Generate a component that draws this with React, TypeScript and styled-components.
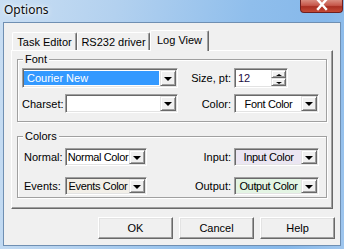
import React from 'react';
import styled, { createGlobalStyle } from 'styled-components';

const GlobalStyle = createGlobalStyle`
  html, body {
    margin: 0;
    padding: 0;
    background: #a9cbee;
  }
  body {
    font-family: "Liberation Sans", Arial, sans-serif;
    font-size: 11px;
    color: #000;
  }
`;

const Window = styled.div`
  width: 344px;
  height: 249px;
  display: flex;
  flex-direction: column;
  overflow: hidden;
  background: linear-gradient(100deg, #c9def3 0%, #b3d1ef 30%, #8fbeec 65%, #86b8ea 85%, #9fc6ee 100%);
`;

const TitleBar = styled.div`
  height: 22px;
  flex-shrink: 0;
  display: flex;
  justify-content: space-between;
  align-items: flex-start;
`;

const Title = styled.div`
  font-family: "Noto Sans", "Open Sans", sans-serif;
  font-size: 12px;
  line-height: 16px;
  margin: 2px 0 0 4px;
  color: #0b0b0b;
  text-shadow: 0 0 6px #eef6ff, 0 0 3px #ffffff;
`;

const CloseButton = styled.div`
  width: 43px;
  height: 13px;
  margin-right: 1px;
  box-sizing: border-box;
  border: 1px solid #6e2020;
  border-top: none;
  border-radius: 0 0 4px 4px;
  background: linear-gradient(#d98b7e 0%, #c6574a 45%, #a92f22 55%, #c44a36 100%);
  display: flex;
  justify-content: center;
  align-items: flex-start;
`;

const Client = styled.div`
  box-sizing: border-box;
  height: 224px;
  margin: 0 3px 0 3px;
  border: 1px solid #6f8fb2;
  background: #f0f0f0;
  display: flex;
  flex-direction: column;
`;

const TabControl = styled.div`
  margin: 7px 0 0 7px;
  width: 322px;
  display: flex;
  flex-direction: column;
`;

const TabStrip = styled.div`
  display: flex;
  align-items: flex-end;
  height: 20px;
  padding-left: 1px;
`;

const Tab = styled.div<{ $w: number; $active?: boolean }>`
  box-sizing: border-box;
  width: ${(p) => p.$w}px;
  height: ${(p) => (p.$active ? 21 : 18)}px;
  margin-bottom: ${(p) => (p.$active ? -1 : 0)}px;
  position: relative;
  z-index: ${(p) => (p.$active ? 2 : 1)};
  background: #f0f0f0;
  border-top: 1px solid #ffffff;
  border-left: 1px solid #ffffff;
  border-right: 1px solid #696969;
  box-shadow: inset -1px 0 #a0a0a0;
  border-radius: 2px 2px 0 0;
  display: flex;
  align-items: center;
  justify-content: center;
  padding-bottom: ${(p) => (p.$active ? 2 : 0)}px;
  white-space: nowrap;
`;

const Panel = styled.div`
  box-sizing: border-box;
  height: 159px;
  border-top: 1px solid #ffffff;
  border-left: 1px solid #ffffff;
  border-right: 1px solid #696969;
  border-bottom: 1px solid #696969;
  box-shadow: inset -1px -1px #a0a0a0;
  padding: 8px 5px 0 5px;
  display: flex;
  flex-direction: column;
  gap: 14px;
`;

const Group = styled.div<{ $h: number; $pt: number }>`
  position: relative;
  box-sizing: border-box;
  height: ${(p) => p.$h}px;
  border: 1px solid #a0a0a0;
  box-shadow: inset 1px 1px #ffffff, 1px 1px #ffffff;
  padding-top: ${(p) => p.$pt}px;
`;

const Legend = styled.span`
  position: absolute;
  top: -7px;
  left: 5px;
  padding: 0 2px;
  line-height: 13px;
  background: #f0f0f0;
`;

const FontGrid = styled.div`
  display: grid;
  grid-template-columns: 43px 113px 56px 85px;
  grid-template-rows: 20px 19px;
  row-gap: 6px;
  align-items: center;
  padding-left: 4px;
`;

const ColorGrid = styled.div`
  display: grid;
  grid-template-columns: 41px 82px 87px 85px;
  grid-template-rows: 18px 18px;
  row-gap: 11px;
  align-items: center;
  padding-left: 6px;
`;

const Label = styled.div<{ $right?: boolean }>`
  text-align: ${(p) => (p.$right ? 'right' : 'left')};
  padding-right: ${(p) => (p.$right ? 3 : 0)}px;
  white-space: nowrap;
`;

const Sunken = styled.div<{ $bg?: string; $span?: number; $w?: number }>`
  box-sizing: border-box;
  height: 100%;
  ${(p) => (p.$w ? `width: ${p.$w}px;` : '')}
  ${(p) => (p.$span ? `grid-column: span ${p.$span};` : '')}
  border: 1px solid;
  border-color: #a0a0a0 #ffffff #ffffff #a0a0a0;
  box-shadow: inset 1px 1px #696969, inset -1px -1px #e3e3e3;
  background: ${(p) => p.$bg || '#ffffff'};
  padding: 1px;
  display: flex;
`;

const ComboText = styled.div<{ $selected?: boolean; $center?: boolean }>`
  flex: 1;
  min-width: 0;
  display: flex;
  align-items: center;
  justify-content: ${(p) => (p.$center ? 'center' : 'flex-start')};
  padding-left: ${(p) => (p.$center ? 0 : 3)}px;
  margin: ${(p) => (p.$selected ? '1px 1px 1px 0' : '0')};
  background: ${(p) => (p.$selected ? '#3399ff' : 'transparent')};
  color: ${(p) => (p.$selected ? '#ffffff' : '#000000')};
  letter-spacing: ${(p) => (p.$center ? '-0.35px' : '0')};
  white-space: nowrap;
  overflow: hidden;
`;

const DropButton = styled.div`
  box-sizing: border-box;
  width: 16px;
  height: 100%;
  flex-shrink: 0;
  background: #f0f0f0;
  border: 1px solid;
  border-color: #e3e3e3 #696969 #696969 #e3e3e3;
  box-shadow: inset 1px 1px #ffffff, inset -1px -1px #a0a0a0;
  display: flex;
  align-items: center;
  justify-content: center;
`;

const Arrow = styled.div<{ $up?: boolean; $small?: boolean }>`
  width: 0;
  height: 0;
  border-left: ${(p) => (p.$small ? 3 : 4)}px solid transparent;
  border-right: ${(p) => (p.$small ? 3 : 4)}px solid transparent;
  ${(p) => (p.$up ? 'border-bottom' : 'border-top')}: ${(p) => (p.$small ? 2 : 4)}px solid #000;
  margin-top: 1px;
`;

const SpinText = styled.div`
  flex: 1;
  display: flex;
  align-items: center;
  padding-left: 2px;
  color: #1c0c44;
`;

const SpinButtons = styled.div`
  width: 15px;
  display: flex;
  flex-direction: column;
`;

const SpinButton = styled(DropButton)`
  width: 15px;
  height: 50%;
`;

const ButtonRow = styled.div`
  display: flex;
  justify-content: flex-end;
  gap: 6px;
  margin: 8px 5px 0 0;
`;

const Button = styled.div`
  box-sizing: border-box;
  width: 75px;
  height: 22px;
  background: #f0f0f0;
  border: 1px solid;
  border-color: #ffffff #696969 #696969 #ffffff;
  box-shadow: inset -1px -1px #a0a0a0, inset 1px 1px #e3e3e3;
  display: flex;
  align-items: center;
  justify-content: center;
`;

function Combo({
  text,
  bg,
  span,
  selected,
  center,
}: {
  text: string;
  bg?: string;
  span?: number;
  selected?: boolean;
  center?: boolean;
}) {
  return (
    <Sunken $bg={bg} $span={span}>
      <ComboText $selected={selected} $center={center}>
        {text}
      </ComboText>
      <DropButton>
        <Arrow />
      </DropButton>
    </Sunken>
  );
}

export default function App() {
  return (
    <>
      <GlobalStyle />
      <Window>
        <TitleBar>
          <Title>Options</Title>
          <CloseButton>
            <svg width="14" height="11" viewBox="0 0 14 11">
              <path d="M3 0 L11 9 M11 0 L3 9" stroke="#ffffff" strokeWidth="2.4" strokeLinecap="square" />
            </svg>
          </CloseButton>
        </TitleBar>
        <Client>
          <TabControl>
            <TabStrip>
              <Tab $w={65}>Task Editor</Tab>
              <Tab $w={73}>RS232 driver</Tab>
              <Tab $w={59} $active>
                Log View
              </Tab>
            </TabStrip>
            <Panel>
              <Group $h={63} $pt={8}>
                <Legend>Font</Legend>
                <FontGrid>
                  <Combo text="Courier New" span={2} selected />
                  <Label $right>Size, pt:</Label>
                  <Sunken $w={54}>
                    <SpinText>12</SpinText>
                    <SpinButtons>
                      <SpinButton>
                        <Arrow $up $small />
                      </SpinButton>
                      <SpinButton>
                        <Arrow $small />
                      </SpinButton>
                    </SpinButtons>
                  </Sunken>
                  <Label>Charset:</Label>
                  <Combo text="" />
                  <Label $right>Color:</Label>
                  <Combo text="Font Color" center />
                </FontGrid>
              </Group>
              <Group $h={62} $pt={11}>
                <Legend>Colors</Legend>
                <ColorGrid>
                  <Label>Normal:</Label>
                  <Combo text="Normal Color" center />
                  <Label $right>Input:</Label>
                  <Combo text="Input Color" bg="#ebe6f2" center />
                  <Label>Events:</Label>
                  <Combo text="Events Color" bg="#f2efe8" center />
                  <Label $right>Output:</Label>
                  <Combo text="Output Color" bg="#e3f4e3" center />
                </ColorGrid>
              </Group>
            </Panel>
          </TabControl>
          <ButtonRow>
            <Button>OK</Button>
            <Button>Cancel</Button>
            <Button>Help</Button>
          </ButtonRow>
        </Client>
      </Window>
    </>
  );
}
